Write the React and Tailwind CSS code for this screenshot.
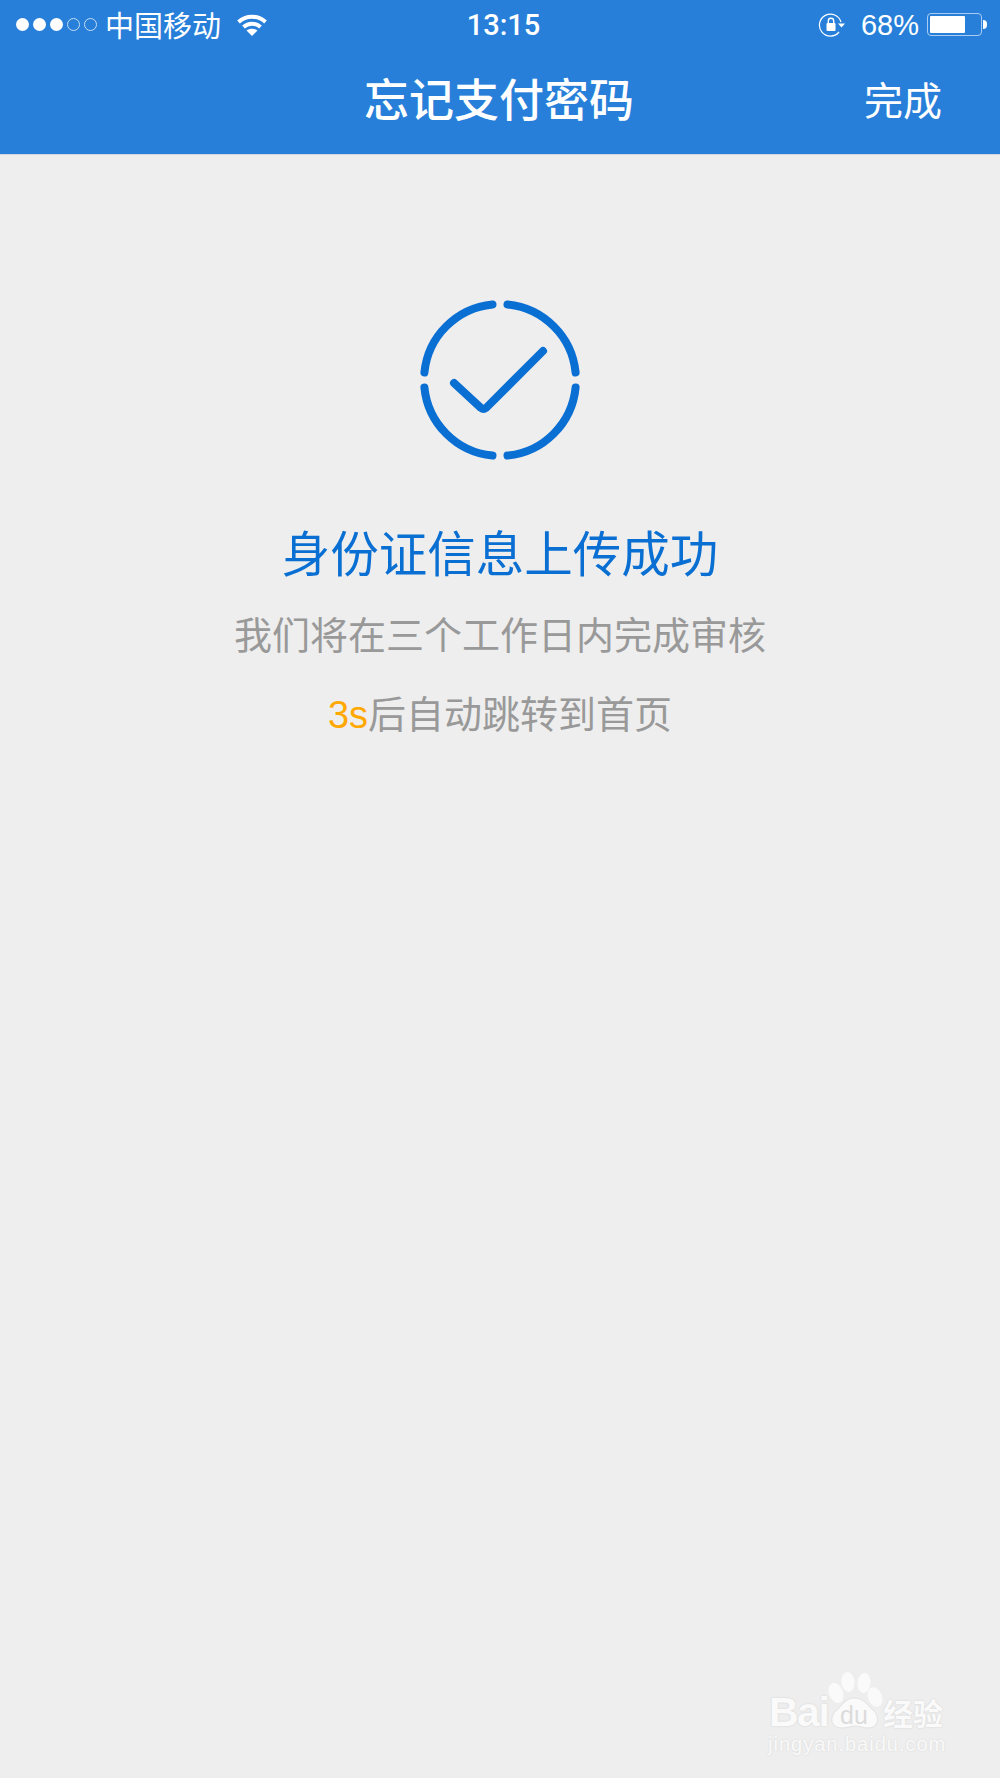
const cjk = "font-['Noto_Sans_CJK_SC','Noto_Sans',sans-serif]";

function Wifi() {
  return (
    <svg width="30" height="22" viewBox="0 0 30 22" fill="none" stroke="#fff" strokeWidth="4">
      <path d="M1.5 8C9 1 21 1 28.5 8" />
      <path d="M6.5 13C11.3 8.6 18.7 8.6 23.5 13" />
      <path d="M15 22L9.5 16.5C12.6 14.2 17.4 14.2 20.5 16.5Z" fill="#fff" stroke="none" />
    </svg>
  );
}

function RotationLock() {
  return (
    <svg width="29" height="26" viewBox="0 0 29 26" fill="none">
      <path d="M21 20A11 11 0 1 1 23 10" stroke="#fff" strokeWidth="1.2" />
      <path d="M20 11.5H27L23.5 15.5Z" fill="#fff" />
      <rect x="8.5" y="11" width="9" height="8" rx="1" fill="#fff" />
      <path d="M10.3 11.5V9a2.7 2.7 0 0 1 5.4 0V11.5" stroke="#fff" strokeWidth="1.4" />
    </svg>
  );
}

function Battery() {
  return (
    <div className="flex items-center">
      <div className="w-[55px] h-[23px] rounded-[4px] border border-[#a9ccf0] p-[2px] flex">
        <div className="w-[35px] bg-white rounded-[1px]" />
      </div>
      <div className="w-[4px] h-[9px] ml-[1px] bg-white rounded-r-full" />
    </div>
  );
}

function SuccessIcon() {
  return (
    <svg width="160" height="160" viewBox="0 0 160 160" fill="none" stroke="#0a6fd2" strokeWidth="8" strokeLinecap="round" strokeLinejoin="round">
      <path d="M72.5 4.4A76 76 0 0 0 4.4 72.5" />
      <path d="M87.5 4.4A76 76 0 0 1 155.6 72.5" />
      <path d="M4.4 87.5A76 76 0 0 0 72.5 155.6" />
      <path d="M155.6 87.5A76 76 0 0 1 87.5 155.6" />
      <path d="M34 83L61 108C62.5 109.2 64.5 109.2 66 108L123 51" />
    </svg>
  );
}

function Watermark() {
  return (
    <div className="absolute left-[768px] top-[1668px] w-[190px] h-[100px] text-white">
      <svg className="absolute left-[0px] top-[0px]" width="190" height="70" viewBox="0 0 190 70" fill="none">
        <ellipse cx="68" cy="25" rx="7" ry="10.5" fill="#fafafa" transform="rotate(-22 68 25)" />
        <ellipse cx="80" cy="14" rx="6.5" ry="10" fill="#fafafa" transform="rotate(-6 80 14)" />
        <ellipse cx="96" cy="15" rx="6.5" ry="10" fill="#fafafa" transform="rotate(6 96 15)" />
        <ellipse cx="107" cy="29" rx="7" ry="10" fill="#fafafa" transform="rotate(-22 107 29)" />
        <path d="M86 30C77 30 74 38 69 42C61 48 62 60 74 60C80 60 83 58 87 58C92 58 95 60 100 60C111 60 112 48 105 42C99 37 96 30 86 30Z" fill="#fafafa" stroke="#e2e2e2" strokeWidth="1" />
      </svg>
      <span className="absolute left-[1px] top-[20px] font-['Liberation_Sans',sans-serif] text-[41px] leading-[48px] font-bold tracking-[-1.5px] text-[#fafafa] [text-shadow:0_0_2px_#cfcfcf]">Bai</span>
      <span className="absolute left-[72px] top-[32px] font-['Liberation_Sans',sans-serif] text-[25px] leading-[30px] text-[#dcdcdc]">du</span>
      <span className={`absolute left-[115px] top-[26px] ${cjk} text-[30px] leading-[36px] font-bold text-[#fafafa] [text-shadow:0_0_2px_#cfcfcf]`}>经验</span>
      <span className="absolute left-[0px] top-[64px] font-['Liberation_Sans',sans-serif] text-[20px] leading-[24px] tracking-[1px] text-[#f9f9f9] [text-shadow:0_0_2px_#d5d5d5]">jingyan.baidu.com</span>
    </div>
  );
}

export default function App() {
  return (
    <div className={`relative w-[1000px] h-[1778px] overflow-hidden bg-[#eeeeee] ${cjk}`}>
      <header className="bg-[#277fd9] h-[155px] border-b border-[#d3d6da] text-white">
        <div className="grid grid-cols-[1fr_auto_1fr] items-center h-[49px] pl-[16px] pr-[13px]">
          <div className="flex items-center">
            <div className="flex items-center gap-[4px]">
              <span className="w-[13px] h-[13px] rounded-full bg-white" />
              <span className="w-[13px] h-[13px] rounded-full bg-white" />
              <span className="w-[13px] h-[13px] rounded-full bg-white" />
              <span className="w-[13px] h-[13px] rounded-full border border-[#c4dcf5]" />
              <span className="w-[13px] h-[13px] rounded-full border border-[#c4dcf5]" />
            </div>
            <span className="ml-[8px] mb-[2px] text-[29px] leading-[40px]">中国移动</span>
            <span className="ml-[16px] flex"><Wifi /></span>
          </div>
          <div className="font-['Roboto',sans-serif] text-[29px] font-medium leading-[40px] text-center w-[76px] translate-x-[2px]">13:15</div>
          <div className="flex items-center justify-end">
            <RotationLock />
            <span className="ml-[14px] font-['Liberation_Sans',sans-serif] text-[29px] leading-[40px]">68%</span>
            <span className="ml-[8px] flex"><Battery /></span>
          </div>
        </div>
        <div className="grid grid-cols-[1fr_auto_1fr] items-center h-[105px] pb-[8px] pr-[58px]">
          <div />
          <h1 className="text-[45px] leading-[60px] font-medium translate-x-[28px]">忘记支付密码</h1>
          <div className="text-right text-[39px] leading-[50px]">完成</div>
        </div>
      </header>
      <main className="flex flex-col items-center">
        <div className="mt-[145px] flex"><SuccessIcon /></div>
        <h2 className="mt-[59px] text-[48.5px] leading-[64px] font-normal text-[#0a6fd2]">身份证信息上传成功</h2>
        <p className="mt-[25px] text-[38px] leading-[50px] text-[#999999]">我们将在三个工作日内完成审核</p>
        <p className="mt-[29px] text-[38px] leading-[50px] text-[#999999]">
          <span className="text-[#ffa800] font-['Liberation_Sans',sans-serif]">3s</span>后自动跳转到首页
        </p>
      </main>
      <Watermark />
    </div>
  );
}
